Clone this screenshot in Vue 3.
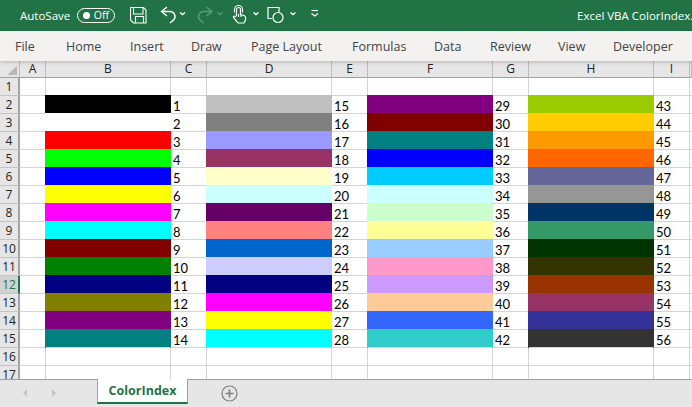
<script setup>
const palette = ['000000','FFFFFF','FF0000','00FF00','0000FF','FFFF00','FF00FF','00FFFF','800000','008000','000080','808000','800080','008080','C0C0C0','808080','9999FF','993366','FFFFCC','CCFFFF','660066','FF8080','0066CC','CCCCFF','000080','FF00FF','FFFF00','00FFFF','800080','800000','008080','0000FF','00CCFF','CCFFFF','CCFFCC','FFFF99','99CCFF','FF99CC','CC99FF','FFCC99','3366FF','33CCCC','99CC00','FFCC00','FF9900','FF6600','666699','969696','003366','339966','003300','333300','993300','993366','333399','333333']
const columns = ['A','B','C','D','E','F','G','H','I','']
const ribbon = [
  { label: 'File', width: 51 },
  { label: 'Home', width: 64 },
  { label: 'Insert', width: 61 },
  { label: 'Draw', width: 60 },
  { label: 'Page Layout', width: 101 },
  { label: 'Formulas', width: 82 },
  { label: 'Data', width: 56 },
  { label: 'Review', width: 68 },
  { label: 'View', width: 55 },
  { label: 'Developer', width: 70 },
]
const rows = Array.from({ length: 17 }, (_, i) => {
  const n = i + 1
  const cells = [{ key: 'a' }]
  for (let k = 0; k < 4; k++) {
    const has = n >= 2 && n <= 15
    const idx = k * 14 + n - 1
    cells.push({ key: 'f' + k, color: has ? '#' + palette[idx - 1] : null })
    cells.push({ key: 'n' + k, text: has ? idx : '' })
  }
  cells.push({ key: 'j' })
  return { n, cells }
})
</script>

<template>
  <div class="app">
    <header class="title">
      <span class="autosave">AutoSave</span>
      <span class="toggle"><i class="dot"></i><span class="off">Off</span></span>
      <svg class="qat" width="190" height="31" viewBox="130 0 190 31" fill="none" stroke="#fff" stroke-width="1.100">
        <path d="M130.500 7.500h13l2.500 2.500v13h-12.500l-3-3z" />
        <path d="M133.500 7.500v6.500h9.500v-6.500M135.500 23v-6.500h8v6.500" />
        <path d="M167 7l-5.500 4.500l5.500 4.500M161.500 11.500h8.500a5 5 0 0 1 4 8l-4 3.500" stroke-width="1.400" />
        <path d="M180 12.500l2.500 2l2.500-2M253.500 12.500l2.500 2l2.500-2M290.500 12.500l2.500 2l2.500-2" stroke-width="1.400" />
        <g stroke="#5c9a7a">
          <path d="M206.500 7l5.500 4.500l-5.500 4.500M212 11.500h-8.500a5 5 0 0 0-4 8l4 3.500" stroke-width="1.400" />
          <path d="M217.500 12.500l2.500 2l2.500-2" stroke-width="1.400" />
        </g>
        <path d="M236.500 16v-6.500a2 2 0 0 1 4 0v5l3.500 1q1.500 .5 1.500 2v2.500l-1.500 3h-6l-4.500-5.500q-.5-1.500 1.500-1.500l1 1" stroke-width="1.200" />
        <path d="M234.500 12.500v-3a4 4 0 0 1 8 0v3M238.500 14v3M241 15v2" />
        <path d="M272 18.500h-4v-11h11v5" stroke-width="1.200" />
        <circle cx="278" cy="17.500" r="5" stroke-width="1.200" />
        <path d="M311.500 10.500h6.500" stroke-width="1.200" />
        <path d="M311.500 13.500l3.200 2.500l3.200-2.500" stroke-width="1.200" />
      </svg>
      <span class="doc">Excel VBA ColorIndex.xlsm</span>
    </header>

    <nav class="ribbon">
      <span v-for="t in ribbon" :key="t.label" class="rtab" :style="{ width: t.width + 'px' }">{{ t.label }}</span>
    </nav>

    <main class="sheet">
      <div class="corner"><i class="tri"></i></div>
      <div v-for="c in columns" :key="c" class="colh">{{ c }}</div>
      <template v-for="r in rows" :key="r.n">
        <div class="rowh" :class="{ active: r.n === 12 }">{{ r.n }}</div>
        <div
          v-for="c in r.cells"
          :key="c.key"
          class="cell"
          :class="{ fill: c.color }"
          :style="c.color ? { '--c': c.color } : null"
        >{{ c.text }}</div>
      </template>
    </main>

    <footer class="tabs">
      <svg class="arrows" width="50" height="10" viewBox="0 0 50 10" fill="#c4c4c4">
        <path d="M4 1v8l-4-4z" />
        <path d="M29 1v8l4-4z" />
      </svg>
      <div class="tab">ColorIndex</div>
      <svg class="plus" width="17" height="17" viewBox="0 0 17 17" fill="none" stroke="#7f7f7f">
        <circle cx="8.500" cy="8.500" r="7.500" stroke-width="1.200" />
        <path d="M4.500 8.500h8M8.500 4.500v8" stroke-width="1.600" />
      </svg>
    </footer>
  </div>
</template>

<style scoped>
.app {
  width: 692px;
  height: 407px;
  display: flex;
  flex-direction: column;
  overflow: hidden;
  background: #fff;
  font-family: "Open Sans", "Noto Sans", sans-serif;
}
.title {
  flex: 0 0 31px;
  display: flex;
  align-items: center;
  padding-left: 20px;
  background: #217346;
  color: #fff;
  font-size: 11.500px;
  white-space: nowrap;
}
.autosave {
  width: 57px;
  flex: none;
}
.toggle {
  flex: none;
  width: 38px;
  height: 15px;
  box-sizing: border-box;
  border: 1px solid #fff;
  border-radius: 8px;
  display: flex;
  align-items: center;
  padding: 0 5px 0 5px;
  justify-content: space-between;
}
.dot {
  width: 7px;
  height: 7px;
  border-radius: 50%;
  background: #fff;
}
.off {
  font-size: 10.500px;
  line-height: 13px;
}
.qat {
  flex: none;
  margin-left: 15px;
}
.doc {
  flex: none;
  margin-left: 257px;
}
.ribbon {
  flex: 0 0 30px;
  display: flex;
  align-items: center;
  padding-left: 15px;
  background: #f3f2f1;
  color: #444;
  font-size: 12.500px;
  position: relative;
  z-index: 2;
  box-shadow: 0 1px 4px rgba(0, 0, 0, 0.22);
  white-space: nowrap;
}
.rtab {
  flex: none;
}
.sheet {
  flex: 0 0 318px;
  display: grid;
  grid-template-columns: 20px 26px 125px 36px 125px 36px 125px 36px 125px 36px 2px;
  grid-template-rows: 17px repeat(17, 18px);
  overflow: hidden;
  font-family: Lato, "Open Sans", sans-serif;
  font-size: 13px;
  color: #000;
}
.corner {
  background: #e6e6e6;
  border-right: 1px solid #bdbdbd;
  border-bottom: 1px solid #9f9f9f;
  padding: 5px 0 0 7px;
  box-sizing: border-box;
}
.tri {
  display: block;
  width: 0;
  height: 0;
  border-left: 10px solid transparent;
  border-bottom: 9px solid #b9b9b9;
}
.colh {
  background: #e6e6e6;
  border-right: 1px solid #bdbdbd;
  border-bottom: 1px solid #9f9f9f;
  box-sizing: border-box;
  text-align: center;
  font-size: 12px;
  line-height: 16px;
  font-family: "Open Sans", sans-serif;
  color: #222;
  overflow: hidden;
}
.rowh {
  background: #e6e6e6;
  border-right: 2px solid #a3a3a3;
  border-bottom: 1px solid #c4c4c4;
  box-sizing: border-box;
  text-align: center;
  font-size: 12px;
  line-height: 18px;
  font-family: "Open Sans", sans-serif;
  color: #222;
}
.rowh.active {
  background: #d2d2d2;
  border-right-color: #217346;
  color: #217346;
}
.cell {
  border-right: 1px solid #d4d4d4;
  border-bottom: 1px solid #d4d4d4;
  box-sizing: border-box;
  padding-left: 2px;
  line-height: 20px;
  white-space: nowrap;
}
.fill {
  background: var(--c);
  border-right-color: var(--c);
  box-shadow: -1px 0 0 var(--c), 0 -1px 0 var(--c), -1px -1px 0 var(--c);
}
.tabs {
  flex: 1;
  display: flex;
  align-items: flex-start;
  position: relative;
  z-index: 2;
  background: #e6e6e6;
  border-top: 1px solid #9f9f9f;
}
.arrows {
  flex: none;
  margin: 8px 0 0 23px;
}
.tab {
  flex: none;
  margin: -1px 0 0 24px;
  width: 91px;
  height: 25px;
  box-sizing: border-box;
  background: #fff;
  border-left: 1px solid #9f9f9f;
  border-right: 1px solid #9f9f9f;
  border-bottom: 2px solid #217346;
  color: #217346;
  font-weight: 700;
  font-size: 12.500px;
  line-height: 24px;
  text-align: center;
}
.plus {
  flex: none;
  margin: 5px 0 0 33px;
}
</style>
